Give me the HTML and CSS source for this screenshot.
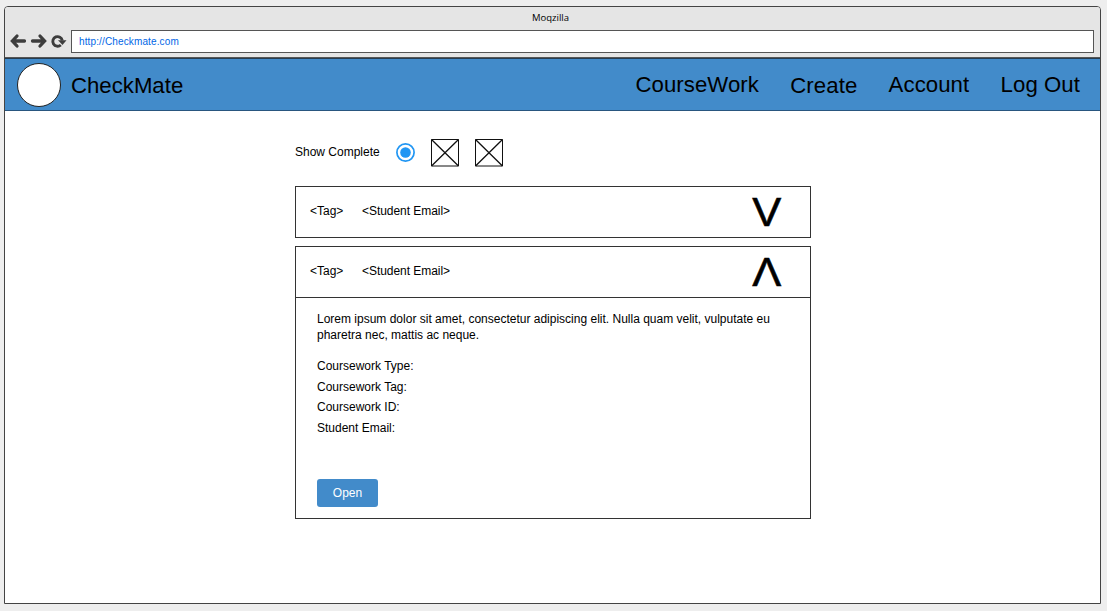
FILE: index.html
```html
<!DOCTYPE html>
<html lang="en">
<head>
<meta charset="utf-8">
<title>CheckMate</title>
<link rel="stylesheet" href="styles.css">
</head>
<body>
<div class="window">
  <header class="chrome">
    <div class="title">Moqzilla</div>
    <div class="toolbar">
      <svg class="controls" width="58" height="18" viewBox="0 0 58 18" fill="none" stroke="#3d3d3d" stroke-width="3.3" stroke-linecap="round">
        <path d="M8 4L3.400 9l4.600 5M4 9H15.500"/>
        <path d="M31 4L35.600 9 31 14M35 9H23.500"/>
        <path d="M51.800 13A4.800 4.800 0 1 1 53.300 8.500" stroke-width="2.900" stroke-linecap="butt"/>
        <path d="M49 8.200H57.500L53.500 13Z" fill="#3d3d3d" stroke="none"/>
      </svg>
      <div class="address">http://Checkmate.com</div>
    </div>
  </header>
  <nav class="navbar">
    <span class="logo"></span>
    <span class="brand">CheckMate</span>
    <div class="links">
      <a class="coursework">CourseWork</a>
      <a class="create">Create</a>
      <a class="account">Account</a>
      <a class="logout">Log Out</a>
    </div>
  </nav>
  <main class="content">
    <div class="filters">
      <span class="filter-label">Show Complete</span>
      <svg class="radio" width="19" height="19" viewBox="0 0 19 19"><circle cx="9.500" cy="9.500" r="8.600" fill="#fff" stroke="#2196f3" stroke-width="1.700"/><circle cx="9.500" cy="9.500" r="5.300" fill="#2196f3"/></svg>
      <svg class="box" width="28" height="28" viewBox="0 0 28 28" fill="none" stroke="#111"><path d="M.5.5h27v26.500H.500Z"/><path stroke-width="1.300" d="M.500.500l27 26.500M27.500.500L.500 27"/></svg>
      <svg class="box" width="28" height="28" viewBox="0 0 28 28" fill="none" stroke="#111"><path d="M.5.5h27v26.500H.500Z"/><path stroke-width="1.300" d="M.500.500l27 26.500M27.500.500L.500 27"/></svg>
    </div>
    <section class="card">
      <div class="card-head"><span class="tag">&lt;Tag&gt;</span><span class="email">&lt;Student Email&gt;</span><span class="toggle">V</span></div>
    </section>
    <section class="card open">
      <div class="card-head"><span class="tag">&lt;Tag&gt;</span><span class="email">&lt;Student Email&gt;</span><span class="toggle up">V</span></div>
      <div class="card-body">
        <p class="summary">Lorem ipsum dolor sit amet, consectetur adipiscing elit. Nulla quam velit, vulputate eu<br>pharetra nec, mattis ac neque.</p>
        <ul class="details">
          <li>Coursework Type:</li>
          <li>Coursework Tag:</li>
          <li>Coursework ID:</li>
          <li>Student Email:</li>
        </ul>
        <button class="open-button">Open</button>
      </div>
    </section>
  </main>
</div>
</body>
</html>
```
FILE: styles.css
```css
* { box-sizing: border-box; }
body {
  margin: 0;
  height: 611px;
  padding: 6px 6px 7px 4px;
  overflow: hidden;
  background: #eee;
  color: #000;
  font: 12px/16px "Liberation Sans", Arial, sans-serif;
}
.window {
  height: 598px;
  border: 1px solid #444;
  border-radius: 4px 4px 0 0;
  background: #fff;
  overflow: hidden;
}
.chrome {
  height: 51px;
  background: #e5e5e5;
  border-bottom: 1px solid #555;
}
.title {
  height: 23px;
  padding-right: 4px;
  text-align: center;
  font: 9.5px/22px "Open Sans", sans-serif;
}
.toolbar { display: flex; padding-right: 6px; }
.controls { margin: 2px 0 0 4px; }
.address {
  flex: 1;
  height: 23px;
  margin-left: 4px;
  padding-left: 7px;
  border: 1px solid #555;
  background: #fff;
  color: #0066e6;
  font-size: 10px;
  line-height: 21px;
  letter-spacing: .13px;
}
.navbar {
  display: flex;
  align-items: center;
  height: 53px;
  padding: 0 20px 0 12px;
  border-top: 1px solid #263c50;
  border-bottom: 1px solid #29567f;
  background: #428bca;
  font-size: 22.2px;
  line-height: 26px;
}
.logo {
  width: 44px;
  height: 44px;
  border: 1px solid #222;
  border-radius: 50%;
  background: #fff;
}
.brand { margin-left: 10px; padding-top: 2px; }
.links { display: flex; gap: 31.3px; margin-left: auto; padding-top: 2px; letter-spacing: .07px; }
.create { padding-top: 1px; }
.content { width: 516px; margin-left: 290px; padding-top: 28px; }
.filters { display: flex; height: 47px; }
.filter-label { width: 101px; padding-top: 5px; }
.radio { margin: 4px 16px 0 0; }
.box { margin-right: 16px; }
.card { border: 1px solid #333; height: 52px; margin-bottom: 8px; }
.card-head { display: flex; height: 50px; padding-left: 14px; line-height: 49px; }
.email { letter-spacing: -.05px; }
.tag { width: 52px; }
.toggle {
  height: 50px;
  margin: 0 29.5px 0 auto;
  font-size: 41px;
  line-height: 51px;
  -webkit-text-stroke: .6px #000;
  transform: scaleX(1.06);
}
.toggle.up { transform: scaleX(1.06) rotate(180deg); }
.card.open { height: 273px; }
.card-body { border-top: 1px solid #333; padding: 13px 21px 0; }
.summary { margin: 0; white-space: nowrap; }
.details { list-style: none; margin: 13px 0 0; padding: 0; line-height: 20.6px; }
.open-button {
  display: block;
  width: 61px;
  height: 28px;
  margin-top: 41px;
  padding: 0;
  border: 0;
  border-radius: 3px;
  background: #428bca;
  color: #fff;
  font: 12px "Liberation Sans", Arial, sans-serif;
}
```
